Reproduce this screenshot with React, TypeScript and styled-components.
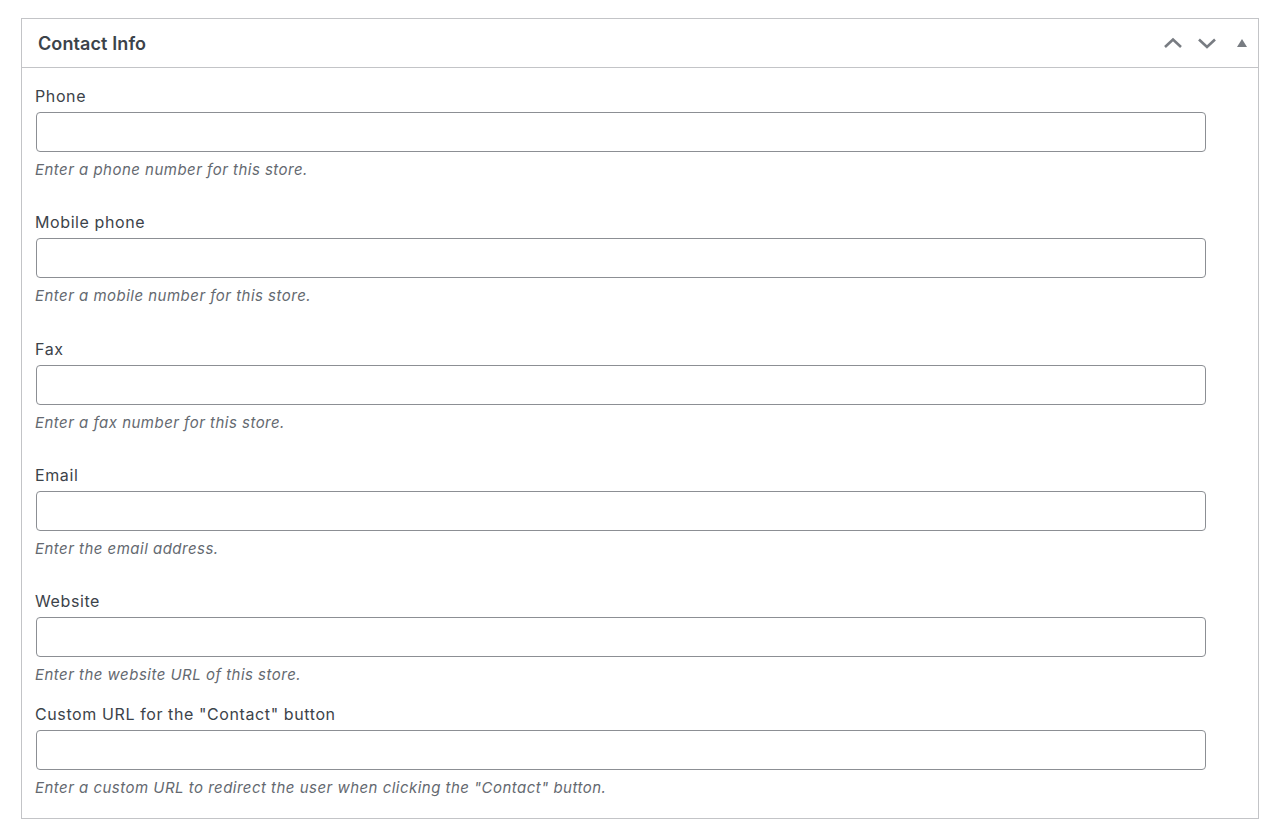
import { FC } from 'react';
import styled, { createGlobalStyle } from 'styled-components';

const GlobalStyle = createGlobalStyle`
  body {
    margin: 0;
    background: #fff;
    font-family: Inter, "Noto Sans", "Liberation Sans", sans-serif;
    color: #3c434a;
  }
`;

interface FieldItem {
  label: string;
  hint: string;
  gap: number;
}

const fields: FieldItem[] = [
  { label: 'Phone', hint: 'Enter a phone number for this store.', gap: 0 },
  { label: 'Mobile phone', hint: 'Enter a mobile number for this store.', gap: 32.3 },
  { label: 'Fax', hint: 'Enter a fax number for this store.', gap: 32.3 },
  { label: 'Email', hint: 'Enter the email address.', gap: 32.3 },
  { label: 'Website', hint: 'Enter the website URL of this store.', gap: 32.3 },
  {
    label: 'Custom URL for the "Contact" button',
    hint: 'Enter a custom URL to redirect the user when clicking the "Contact" button.',
    gap: 19,
  },
];

const Page = styled.div`
  padding: 18px 19px 20px 21px;
`;

const Panel = styled.section`
  width: 1238px;
  box-sizing: border-box;
  border: 1px solid #c3c4c7;
  background: #fff;
`;

const Header = styled.header`
  display: flex;
  align-items: center;
  height: 48px;
  padding: 0 6px 0 16px;
  border-bottom: 1px solid #c3c4c7;
`;

const Title = styled.h2`
  flex: 1;
  margin: 0;
  font-size: 18px;
  font-weight: 600;
  color: #3c434a;
  letter-spacing: 0.1px;
`;

const Controls = styled.div`
  display: flex;
  align-items: center;
  gap: 12px;
`;

const IconButton = styled.button<{ small?: boolean }>`
  display: flex;
  align-items: center;
  justify-content: center;
  width: ${({ small }) => (small ? '20px' : '22px')};
  margin-left: ${({ small }) => (small ? '2px' : '0')};
  height: 36px;
  padding: 0;
  border: 0;
  background: none;
  color: #787c82;
  cursor: pointer;
`;

const Body = styled.div`
  padding: 18px 14px 20px 13px;
`;

const Field = styled.div<{ gap: number }>`
  display: flex;
  flex-direction: column;
  margin-top: ${({ gap }) => gap}px;
`;

const Label = styled.label`
  font-size: 16px;
  line-height: 20px;
  letter-spacing: 0.6px;
  color: #3c434a;
  margin-bottom: 6px;
`;

const Input = styled.input`
  width: 1170px;
  height: 40px;
  box-sizing: border-box;
  margin: 0 0 0 1px;
  border: 1px solid #8c8f94;
  border-radius: 4px;
  padding: 0 10px;
  font-size: 16px;
  font-family: inherit;
  background: #fff;
`;

const Hint = styled.p`
  margin: 8px 0 0;
  font-size: 15px;
  line-height: 20px;
  letter-spacing: 0.48px;
  font-style: italic;
  color: #646970;
`;

const Chevron: FC<{ down?: boolean }> = ({ down }) => (
  <svg width="20" height="12" viewBox="0 0 20 12" fill="none">
    <path
      d={down ? 'M2 2.5 L10 10 L18 2.5' : 'M2 10 L10 2.5 L18 10'}
      stroke="currentColor"
      strokeWidth="2.6"
    />
  </svg>
);

const Triangle: FC = () => (
  <svg width="12" height="10" viewBox="0 0 12 10">
    <path d="M6 1 L11 9 L1 9 Z" fill="currentColor" />
  </svg>
);

const App: FC = () => (
  <>
    <GlobalStyle />
    <Page>
      <Panel>
        <Header>
          <Title>Contact Info</Title>
          <Controls>
            <IconButton aria-label="Move up">
              <Chevron />
            </IconButton>
            <IconButton aria-label="Move down">
              <Chevron down />
            </IconButton>
            <IconButton small aria-label="Toggle panel">
              <Triangle />
            </IconButton>
          </Controls>
        </Header>
        <Body>
          {fields.map((field, index) => (
            <Field key={index} gap={field.gap}>
              <Label>{field.label}</Label>
              <Input type="text" />
              <Hint>{field.hint}</Hint>
            </Field>
          ))}
        </Body>
      </Panel>
    </Page>
  </>
);

export default App;
